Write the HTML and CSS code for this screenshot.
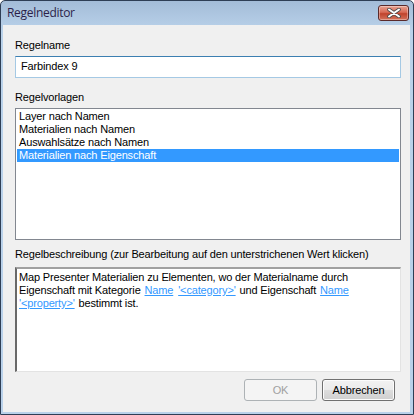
FILE: index.html
```html
<!DOCTYPE html>
<html>
<head>
<meta charset="utf-8">
<link rel="stylesheet" href="styles.css">
</head>
<body>
<div class="window">
  <div class="titlebar">
    <span class="title">Regelneditor</span>
    <button class="close" aria-label="Schließen">
      <svg width="14" height="10" viewBox="0 0 14 10"><path d="M2 1.5 L12 8.5 M12 1.5 L2 8.5" stroke="#4a4a4a" stroke-width="3.6" stroke-linecap="round"/><path d="M2 1.5 L12 8.5 M12 1.5 L2 8.5" stroke="#ffffff" stroke-width="2" stroke-linecap="round"/></svg>
    </button>
  </div>
  <div class="client">
    <div class="label">Regelname</div>
    <div class="input">Farbindex 9</div>
    <div class="label gap">Regelvorlagen</div>
    <ul class="list">
      <li>Layer nach Namen</li>
      <li>Materialien nach Namen</li>
      <li>Auswahlsätze nach Namen</li>
      <li class="selected">Materialien nach Eigenschaft</li>
    </ul>
    <div class="label gap2">Regelbeschreibung (zur Bearbeitung auf den unterstrichenen Wert klicken)</div>
    <div class="desc">Map Presenter Materialien zu Elementen, wo der Materialname durch Eigenschaft mit Kategorie <a>Name</a> <a>'&lt;category&gt;'</a> und Eigenschaft <a>Name</a><br><a class="first">'&lt;property&gt;'</a> bestimmt ist.</div>
    <div class="buttons">
      <button class="btn disabled">OK</button>
      <button class="btn">Abbrechen</button>
    </div>
  </div>
</div>
</body>
</html>
```
FILE: styles.css
```css
* { box-sizing: border-box; }
html, body { margin: 0; padding: 0; }
body { width: 414px; height: 415px; background: #fff; }
.window {
  width: 414px; height: 415px;
  border: 1px solid #2e3e55;
  border-radius: 5px 5px 0 0;
  background: linear-gradient(#a3bcd8, #bad2ea 30px, #b9d1ea);
  padding: 0 3px 2px 2px;
  display: flex; flex-direction: column;
  font-family: "Liberation Sans", Arial, sans-serif;
  font-size: 11px;
  letter-spacing: -0.15px;
  color: #000;
}
.titlebar {
  height: 24px;
  display: flex; align-items: flex-start;
  justify-content: space-between;
  padding-left: 4px;
}
.title {
  font-family: "Open Sans", "Noto Sans", sans-serif;
  font-size: 12px;
  letter-spacing: -0.3px;
  color: #2c1f4a;
  margin-top: 3px;
}
.close {
  width: 31px; height: 16px;
  margin-top: 4px; margin-right: 1px;
  border: 1px solid #5a2a2a;
  border-radius: 3px;
  background: linear-gradient(#e8a393, #d86a55 45%, #c0432c 55%, #d4735c);
  padding: 0;
  display: flex; align-items: center; justify-content: center;
  box-shadow: inset 0 0 0 1px rgba(255,255,255,0.35);
}
.client {
  flex: 1;
  background: #f0f0f0;
  padding: 14px 9px 0 12px;
  display: flex; flex-direction: column;
}
.label { line-height: 13px; height: 13px; white-space: nowrap; }
.label.gap { margin-top: 13px; }
.label.gap2 { margin-top: 8px; }
.input {
  margin-top: 4px;
  height: 22px;
  background: #fff;
  border: 1px solid #a5c9e4;
  border-top-color: #3c7fb1;
  padding: 3px 0 0 5px;
  line-height: 13px;
}
.list {
  list-style: none;
  margin: 4px 0 0 0;
  height: 132px;
  background: #fff;
  border: 1px solid #828790;
  padding: 1px;
}
.list li { height: 13px; line-height: 13px; padding-left: 2px; }
.list li.selected { background: #3399ff; color: #fff; }
.desc {
  margin-top: 6px;
  height: 105px;
  background: #fff;
  border: 1px solid #e3e3e3;
  border-top: 2px solid #a0a0a0;
  border-left: 2px solid #696969;
  padding: 2px 4px 0 2px;
  line-height: 13px;
}
.desc a { color: #3399ff; text-decoration: underline; margin: 0 1px; }
.desc a.first { margin-left: 0; }
.buttons {
  margin-top: 7px;
  display: flex; justify-content: flex-end;
  gap: 5px;
  padding-right: 6px;
}
.btn {
  width: 73px; height: 22px;
  font: inherit;
  letter-spacing: inherit;
  border: 1px solid #707070;
  border-radius: 3px;
  background: linear-gradient(#f2f2f2, #ebebeb 50%, #dddddd 51%, #cfcfcf);
  box-shadow: inset 0 0 0 1px #fcfcfc;
  color: #000;
  padding: 0;
}
.btn.disabled {
  border-color: #adb2b5;
  background: #f4f4f4;
  color: #a0a0a0;
  box-shadow: none;
}
```
